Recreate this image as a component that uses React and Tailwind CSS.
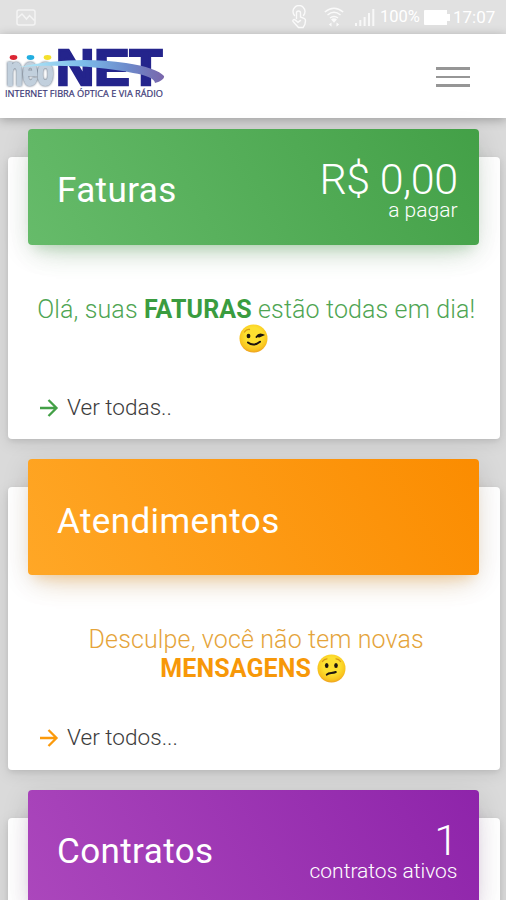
import React from "react";

//  Status bar
function StatusBar() {
  return (
    <div className="flex h-[34px] items-center bg-[#e1e1e1] pl-4 text-[17px] leading-none text-white">
      <svg width="20" height="17" viewBox="0 0 20 17" fill="none" stroke="#f4f4f4" strokeWidth="1.5">
        <rect x="1" y="1" width="18" height="15" rx="2" />
        <path d="M1.5 9 6 5l4.5 5 3-3.500 5 5" />
      </svg>
      <svg className="ml-[255px]" width="17" height="24" viewBox="0 0 17 24" fill="none" stroke="#fafafa" strokeWidth="1.4" strokeLinecap="round">
        <path d="M3.500 10.500a6 6 0 1 1 9 0" />
        <path d="M5.500 13.500V8a2 2 0 0 1 4 0v4l3.500 1.300c1.300.5 1.700 1.200 1.500 2.500l-.6 3.500-1.800 3.200H7.500L2 16.500c-.6-1.800 1-2.400 2-1.600l3 2.500 2.500-2" />
      </svg>
      <svg className="ml-[16px]" width="20" height="22" viewBox="0 0 20 22" fill="none" stroke="#fafafa" strokeWidth="1.5">
        <path d="M.8 6Q10-1.500 19.200 6M3.500 9Q10 3.700 16.500 9M6 12q4-3.200 8 0" />
        <path d="m7 13.300 3 3.500 3-3.500q-3-2-6 0ZM7.500 16.500v4l-2.700-2zM12.500 16.500v4l2.700-2z" fill="#fafafa" stroke="none" />
      </svg>
      <svg className="ml-[11px]" width="20" height="17" viewBox="0 0 20 17" fill="#f8f8f8">
        <path d="M0 14h2v3H0zM4.300 11h2v6h-2zM8.600 8h2v9h-2zM13 4h2v13h-2zM17.300 0h2v17h-2z" />
      </svg>
      <span className="ml-[5px] w-[41px] whitespace-nowrap pt-px text-[16.500px] leading-none">100%</span>
      <svg className="ml-[3px]" width="26" height="15" viewBox="0 0 26 15" fill="#fff">
        <path d="M1 0h22v4h3v7h-3v4H1a1 1 0 0 1-1-1V1a1 1 0 0 1 1-1Z" />
      </svg>
      <span className="ml-[3px] whitespace-nowrap pt-px">17:07</span>
    </div>
  );
}

//  Logo
function Logo() {
  return (
    <svg width="160" height="52" viewBox="0 0 160 52">
      <defs>
        <linearGradient id="swoosh" x1="0" x2="1">
          <stop offset="0" stopColor="#b5ebf8" />
          <stop offset="0.45" stopColor="#7cbbe9" />
          <stop offset="0.75" stopColor="#6c8acb" />
          <stop offset="1" stopColor="#7a66ab" />
        </linearGradient>
      </defs>
      <g fontFamily="Liberation Sans, Arial, sans-serif" fontWeight="700">
        <text
          className="drop-shadow-[0_0_1px_#44566b]"
          x="1.500"
          y="37.500"
          fontSize="40"
          textLength="47"
          lengthAdjust="spacingAndGlyphs"
          fill="#c2d0dd"
          stroke="#c2d0dd"
          strokeWidth="2.200"
        >
          neo
        </text>
        <text x="51" y="38" fontSize="50" textLength="106" lengthAdjust="spacingAndGlyphs" fill="#24248c" stroke="#24248c" strokeWidth="2.600">
          NET
        </text>
      </g>
      <ellipse cx="8.500" cy="10.500" rx="3.800" ry="2.400" fill="#dc2634" />
      <ellipse cx="25.500" cy="10.500" rx="3.800" ry="2.400" fill="#22aee0" />
      <ellipse cx="42.500" cy="10.500" rx="3.800" ry="2.400" fill="#f4e02c" />
      <path d="M14 20C50 12 88 11 121 16c20 3 34 8 38 13 1 3-5 6-9 7 0-4-9-8-22-10C98 20 60 17 14 20Z" fill="url(#swoosh)" />
      <text x="0" y="50" fontFamily="Open Sans, sans-serif" fontSize="8.500" textLength="158" lengthAdjust="spacingAndGlyphs" fill="#3c3977" stroke="#3c3977" strokeWidth="0.200">
        INTERNET FIBRA ÓPTICA E VIA RÁDIO
      </text>
    </svg>
  );
}

//  Emojis
function Emoji({ type }) {
  return (
    <svg className="inline-block align-[-6px]" width="29" height="29" viewBox="0 0 29 29">
      <defs>
        <radialGradient id={type} cx="0.5" cy="0.4" r="0.6">
          <stop offset="0.5" stopColor="#fde030" />
          <stop offset="0.85" stopColor="#f9c31d" />
          <stop offset="1" stopColor="#eda020" />
        </radialGradient>
      </defs>
      <circle cx="14.500" cy="14.500" r="14" fill={`url(#${type})`} />
      {type === "wink" ? (
        <g fill="none" stroke="#1d1510" strokeLinecap="round" strokeWidth="2">
          <ellipse cx="9.500" cy="12" rx="1.900" ry="2.300" fill="#1d1510" stroke="none" />
          <path d="M17.500 13q2.500-3.500 6-2l-3.500 1.500" />
          <path d="M9 18.500q5.500 4.500 12-.8" />
          <path d="M5.500 8q2-3 5-2.500" stroke="#d99a17" strokeWidth="1.300" />
        </g>
      ) : (
        <g fill="none" stroke="#1d1510" strokeLinecap="round" strokeWidth="2">
          <ellipse cx="9.700" cy="11.500" rx="1.800" ry="2.500" fill="#1d1510" stroke="none" />
          <ellipse cx="19" cy="11.500" rx="1.800" ry="2.500" fill="#1d1510" stroke="none" />
          <path d="M9.800 20.700c2.500-3 5-.7 9-2.700" />
          <path d="M5.500 7.500Q7 5 10 4.800M19 4.800q3 .2 4.500 2.700" stroke="#d99a17" strokeWidth="1.300" />
        </g>
      )}
    </svg>
  );
}

function Card({ title, value, label, banner, children, link, arrow }) {
  return (
    <section className="mb-12 ml-2 mr-[6.5px] h-[282.5px] rounded bg-white pl-5 pr-[21px] shadow-[0_2px_5px_rgba(0,0,0,0.08),0_4px_16px_rgba(0,0,0,0.1)]">
      <div className={`flex h-[116px] -translate-y-[28px] items-center justify-between rounded-[4px] pl-[29px] pr-[21px] text-white ${banner}`}>
        <h2 className="pt-[8px] text-[35px] leading-none tracking-[0.4px]">{title}</h2>
        {value && (
          <div className="pt-[2px] text-right font-light">
            <p className="text-[43px] leading-[45px] tracking-[-0.5px]">{value}</p>
            <p className="text-[21px] leading-[16px]">{label}</p>
          </div>
        )}
      </div>
      <div className="mt-[22px] h-[60px] text-center text-[25px] font-light leading-[29px] tracking-[0.13px]">{children}</div>
      <a className="ml-[11px] mt-[38px] flex items-center text-[22.6px] font-light leading-[30px] text-[#3c3c3c]">
        <svg className="mr-[7px]" width="21" height="20" viewBox="0 0 21 20" fill="none" stroke={arrow} strokeWidth="2.3">
          <path d="M1 10h16.500M9.500 2l8 8-8 8" />
        </svg>
        {link}
      </a>
    </section>
  );
}

export default function App() {
  return (
    <div className="h-[900px] w-[506px] overflow-hidden bg-[#dadada] font-['Roboto',sans-serif]">
      <StatusBar />
      <header className="flex h-[84px] items-start justify-between bg-white pl-[5px] pr-9 pt-[13px] shadow-[0_2px_10px_rgba(0,0,0,0.28)]">
        <Logo />
        <div className="mt-[20px] flex w-[34px] flex-col gap-[6px]">
          <span className="h-[2.5px] bg-[#969696]" />
          <span className="h-[2.5px] bg-[#969696]" />
          <span className="h-[2.5px] bg-[#969696]" />
        </div>
      </header>

      <main className="flex flex-col pt-[38.5px]">
        <Card
          title="Faturas"
          value="R$ 0,00"
          label="a pagar"
          link="Ver todas.."
          arrow="#43a047"
          banner="bg-[linear-gradient(60deg,#66bb6a,#43a047)] shadow-[0_16px_28px_-14px_rgba(76,175,80,0.28),0_6px_28px_rgba(0,0,0,0.12),0_10px_11px_-7px_rgba(76,175,80,0.2)]"
        >
          <p className="whitespace-nowrap pl-[6px] text-[#4fa553]">
            Olá, suas <b className="font-bold text-[#3a9c3f]">FATURAS</b> estão todas em dia!
          </p>
          <p>
            <Emoji type="wink" />
          </p>
        </Card>

        <Card
          title="Atendimentos"
          link="Ver todos..."
          arrow="#fb9a0c"
          banner="bg-[linear-gradient(60deg,#ffa726,#fb8c00)] shadow-[0_16px_28px_-14px_rgba(255,152,0,0.28),0_6px_28px_rgba(0,0,0,0.12),0_10px_11px_-7px_rgba(255,152,0,0.2)]"
        >
          <p className="pl-[6px] text-[#e5a43a]">Desculpe, você não tem novas</p>
          <p>
            <b className="font-bold text-[#f79808]">MENSAGENS</b> <Emoji type="confused" />
          </p>
        </Card>

        <Card
          title="Contratos"
          value="1"
          label="contratos ativos"
          link="Ver todos..."
          arrow="#8e24aa"
          banner="bg-[linear-gradient(60deg,#ab47bc,#8e24aa)] shadow-[0_16px_28px_-14px_rgba(156,39,176,0.28),0_6px_28px_rgba(0,0,0,0.12),0_10px_11px_-7px_rgba(156,39,176,0.2)]"
        />
      </main>
    </div>
  );
}
